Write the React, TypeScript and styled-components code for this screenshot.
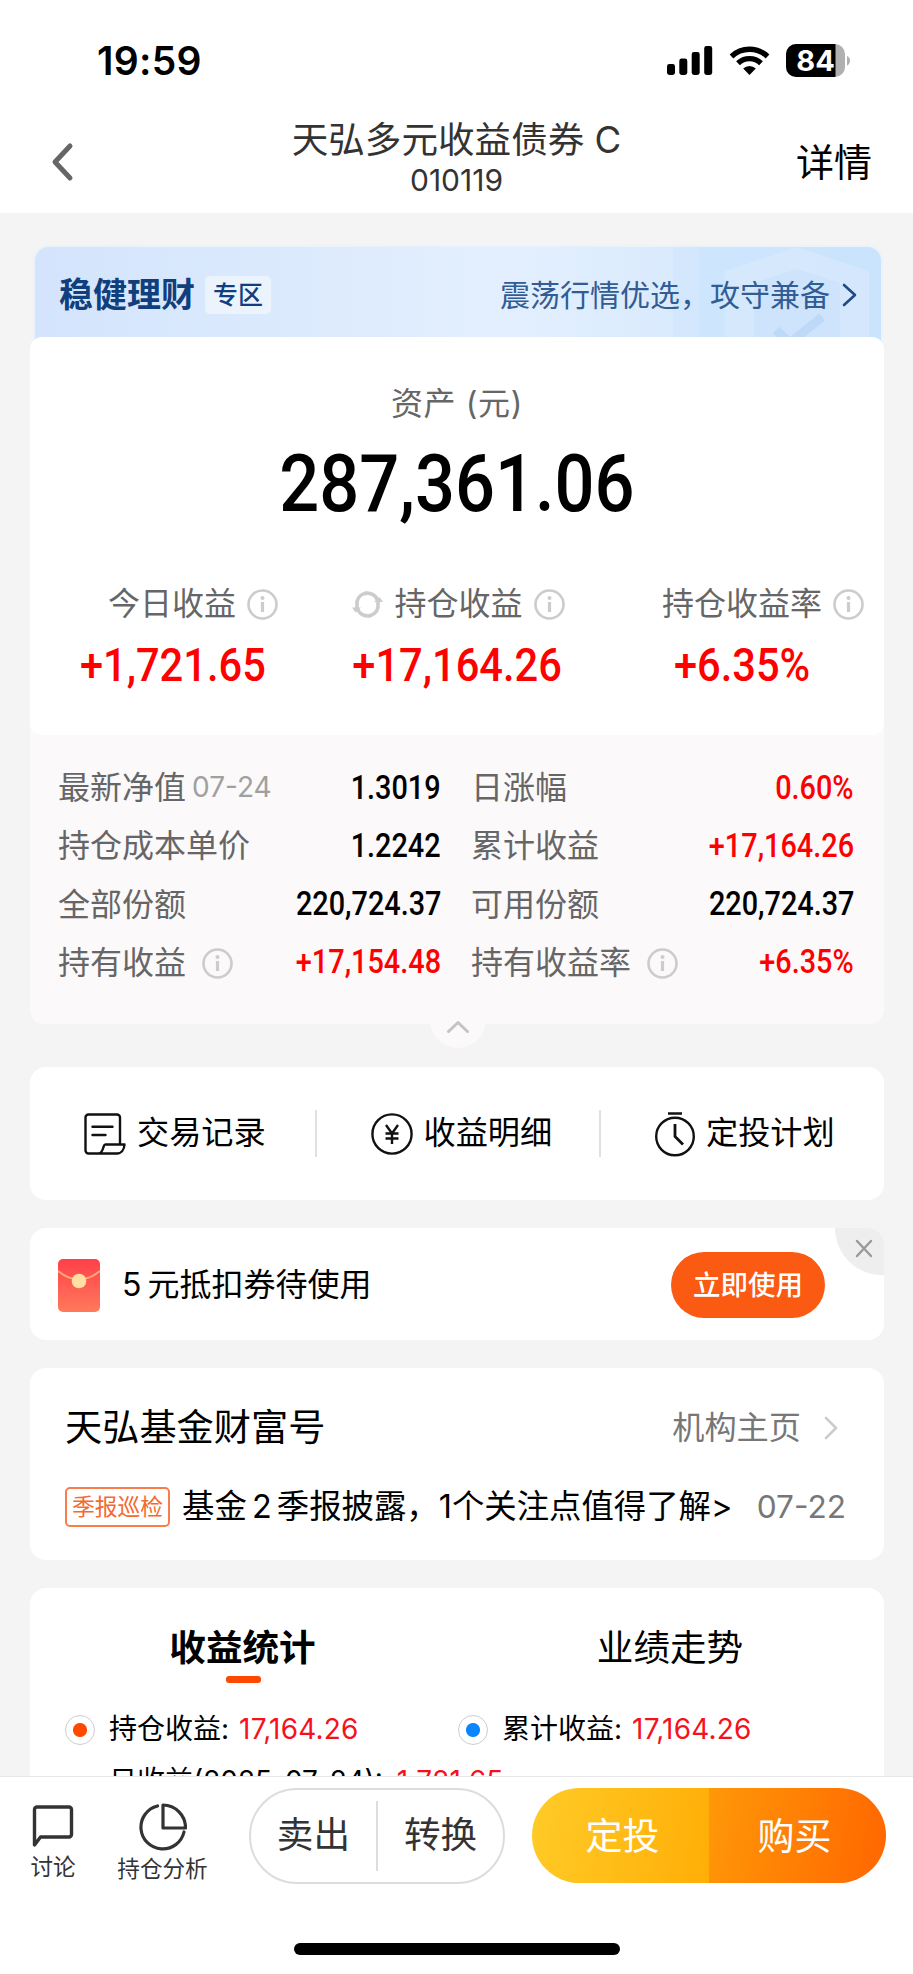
import React from 'react';
import styled, { createGlobalStyle, css } from 'styled-components';

const GlobalStyle = createGlobalStyle`
  * {
    box-sizing: border-box;
  }
  body {
    margin: 0;
    background: #f4f4f4;
    font-family: Inter, 'Noto Sans CJK SC', sans-serif;
    color: #000;
  }
`;

const Page = styled.div`
  width: 913px;
  height: 1974px;
  overflow: hidden;
  display: flex;
  flex-direction: column;
`;

const Row = styled.div<{ gap?: number }>`
  display: flex;
  align-items: center;
  gap: ${props => props.gap || 0}px;
`;

const Text = styled.span<{
  size: number;
  color?: string;
  weight?: number;
  spacing?: number;
}>`
  font-size: ${props => props.size}px;
  line-height: 1.2;
  color: ${props => props.color || '#000'};
  font-weight: ${props => props.weight || 400};
  letter-spacing: ${props => props.spacing || 0}px;
  white-space: nowrap;
`;

const Amount = styled.span<{
  size: number;
  up?: boolean;
  origin?: string;
  stretch?: number;
}>`
  display: inline-block;
  font-family: Roboto, sans-serif;
  font-weight: 500;
  font-size: ${props => props.size}px;
  line-height: 1.2;
  color: ${props => (props.up ? '#f00' : '#000')};
  transform: scaleX(${props => props.stretch || 0.88});
  transform-origin: ${props => props.origin || 'center'};
  white-space: nowrap;
`;

/* header */

const StatusBar = styled.div`
  height: 97px;
  padding: 25px 62px 0 97px;
  background: #fff;
  display: flex;
  align-items: center;
  justify-content: space-between;
`;

const NavBar = styled.div`
  height: 116px;
  padding: 15px 39px 0;
  background: #fff;
  display: grid;
  grid-template-columns: 78px 1fr 78px;
  align-items: center;
`;

const Back = styled.div`
  padding: 0 0 2px 11px;
  display: flex;
`;

const NavTitle = styled.div`
  display: flex;
  flex-direction: column;
  align-items: center;
  padding-bottom: 8px;
`;

const Content = styled.div`
  flex: 1;
  min-height: 0;
  overflow: hidden;
  padding: 32px 29px 0 30px;
`;

/* asset card */

const Banner = styled.div`
  position: relative;
  height: 104px;
  margin: 0 1px 0 3px;
  padding: 0 23px 6px 24px;
  border: 2px solid #eaf2fb;
  border-bottom: 0;
  border-radius: 16px 16px 0 0;
  background: linear-gradient(90deg, #d3e4fc, #e3effe 55%, #cfe6fd);
  overflow: hidden;
  display: flex;
  align-items: center;
  justify-content: space-between;
`;

const Watermark = styled.svg`
  position: absolute;
  right: 0;
  top: 0;
`;

const BannerPart = styled(Row)`
  position: relative;
`;

const Badge = styled.span`
  padding: 0 8px;
  height: 38px;
  border-radius: 5px;
  background: #ebf3fd;
  display: flex;
  align-items: center;
`;

const AssetCard = styled.section`
  position: relative;
  z-index: 1;
  height: 398px;
  margin-top: -12px;
  border-radius: 12px;
  background: #fff;
`;

const AssetTotal = styled.div`
  height: 244px;
  padding-top: 48px;
  display: flex;
  flex-direction: column;
  align-items: center;
  gap: 13px;
`;

const Summary = styled.div`
  display: grid;
  grid-template-columns: repeat(3, 285px);
`;

const SummaryItem = styled.div`
  display: flex;
  flex-direction: column;
  align-items: center;
  gap: 11px;
`;

const SummaryLabel = styled(Row)<{ shift: number }>`
  height: 46px;
  margin-left: ${props => props.shift}px;
`;

const DetailPanel = styled.section`
  position: relative;
  height: 301px;
  margin-top: -12px;
  padding: 36px 30px 0 28px;
  border-radius: 0 0 14px 14px;
  background: #fbf9fa;
`;

const DetailGrid = styled.div`
  display: grid;
  grid-template-columns: 383px 383px;
  column-gap: 30px;
  grid-auto-rows: 58.3px;
`;

const DetailCell = styled.div`
  display: flex;
  align-items: center;
  justify-content: space-between;
`;

const Handle = styled.div`
  position: absolute;
  left: 400px;
  bottom: -24px;
  width: 56px;
  height: 56px;
  border-radius: 50%;
  background: #fbf9fa;
  display: flex;
  justify-content: center;
  padding-top: 28px;
`;

/* cards */

const Card = styled.section<{ height: number; top: number }>`
  position: relative;
  height: ${props => props.height}px;
  margin-top: ${props => props.top}px;
  border-radius: 16px;
  background: #fff;
  overflow: hidden;
`;

const Shortcuts = styled.div`
  height: 100%;
  display: grid;
  grid-template-columns: repeat(3, 284.500px);
  align-items: center;
`;

const Shortcut = styled.div<{ divided?: boolean }>`
  height: 47px;
  padding-left: 54px;
  display: flex;
  align-items: center;
  gap: 11px;
  ${props =>
    props.divided &&
    css`
      border-left: 2px solid #e0e0e0;
    `}
`;

const Coupon = styled(Row)`
  height: 100%;
  padding: 2px 59px 0 28px;
`;

const CouponText = styled(Text)`
  flex: 1;
  margin-left: 22px;
  word-spacing: -3px;
`;

const UseButton = styled.button`
  width: 154px;
  height: 66px;
  border: 0;
  border-radius: 33px;
  padding: 0;
  background: #fb5a13;
  font-family: inherit;
`;

const Close = styled.div`
  position: absolute;
  right: 0;
  top: 0;
  width: 49px;
  height: 47px;
  border-bottom-left-radius: 47px;
  background: #eee;
  display: flex;
  padding: 11px 0 0 20px;
`;

const FundHead = styled.div`
  height: 118px;
  padding: 2px 46px 0 35px;
  display: flex;
  align-items: center;
  justify-content: space-between;
`;

const FundNews = styled.div`
  height: 42px;
  padding: 0 38px 0 35px;
  display: flex;
  align-items: center;
`;

const Tag = styled.span`
  width: 105px;
  height: 40px;
  margin-right: 12px;
  border: 2px solid #f97c4b;
  border-radius: 5px;
  display: flex;
  align-items: center;
  justify-content: center;
`;

const NewsTitle = styled(Text)`
  flex: 1;
  word-spacing: -4px;
`;

const Tabs = styled.div`
  display: grid;
  grid-template-columns: 425px 430px;
`;

const Tab = styled.div<{ active?: boolean }>`
  height: 95px;
  padding-top: 39px;
  display: flex;
  flex-direction: column;
  align-items: center;
  gap: 5px;
  &::after {
    content: '';
    width: 35px;
    height: 7px;
    margin-left: 2px;
    border-radius: 3px;
    background: ${props => (props.active ? '#ff4800' : 'transparent')};
  }
`;

const Legends = styled.div`
  padding: 21px 0 0 35px;
  display: grid;
  grid-template-columns: 393px 1fr;
  grid-auto-rows: 52px;
`;

const Legend = styled.div<{ wide?: boolean }>`
  display: flex;
  align-items: center;
  grid-column: ${props => (props.wide ? '1 / -1' : 'auto')};
`;

const Dot = styled.span<{ color?: string }>`
  width: 30px;
  height: 30px;
  margin-right: 14px;
  border-radius: 50%;
  ${props =>
    props.color &&
    css`
      border: 1px solid #ccccd4;
      background: radial-gradient(circle, ${props.color} 6.5px, #fff 7.5px);
    `}
`;

const LegendLabel = styled(Text)<{ gap: number }>`
  margin-right: ${props => props.gap}px;
`;

/* bottom bar */

const BottomBar = styled.footer`
  height: 198px;
  border-top: 1px solid #e8e8e8;
  background: #fff;
  display: flex;
  flex-direction: column;
  align-items: center;
`;

const BarActions = styled.div`
  width: 100%;
  height: 107px;
  padding: 11px 27px 0 30px;
  display: flex;
`;

const BarItem = styled.div<{ width: number }>`
  width: ${props => props.width}px;
  padding-top: 15px;
  display: flex;
  flex-direction: column;
  align-items: center;
  gap: 4px;
`;

const SellGroup = styled.div`
  width: 256px;
  height: 96px;
  border: 2px solid #dcdcdc;
  border-radius: 48px;
  display: flex;
  align-items: center;
  justify-content: center;
  gap: 26px;
`;

const Divider = styled.span`
  width: 2px;
  height: 70px;
  background: #ddd;
`;

const BuyGroup = styled.div`
  width: 354px;
  height: 95px;
  margin-left: 27px;
  border-radius: 48px;
  overflow: hidden;
  display: grid;
  grid-template-columns: 1fr 1fr;
`;

const BuyButton = styled.div<{ from: string; to: string; inset: string }>`
  display: flex;
  align-items: center;
  justify-content: center;
  padding: ${props => props.inset};
  background: linear-gradient(100deg, ${props => props.from}, ${props => props.to});
`;

const HomeIndicator = styled.div`
  width: 326px;
  height: 12px;
  margin-top: 59px;
  border-radius: 6px;
  background: #000;
`;

/* icons */

const InfoIcon = () => (
  <svg width="31" height="31" viewBox="0 0 31 31" fill="none" stroke="#ccc">
    <circle cx="15.5" cy="15.5" r="14" strokeWidth="2.6" />
    <path d="M15.5 13v10" strokeWidth="3.2" />
    <circle cx="15.5" cy="9" r="2" fill="#ccc" stroke="none" />
  </svg>
);

const RefreshIcon = () => (
  <svg width="31" height="27" viewBox="0 0 31 27" fill="none" stroke="#ccc" strokeWidth="3.6">
    <path d="M12 2.6A11.3 11.3 0 0 1 26 10" />
    <path d="M26 16.5a11.3 11.3 0 0 1-10 8.5" />
    <path d="M19 24.4A11.3 11.3 0 0 1 5 17" />
    <path d="M5 10.5A11.3 11.3 0 0 1 15 2" />
    <path d="M26 8v9" />
    <path d="M5 10v8" />
    <path d="M22 11h9l-3.500-5z" fill="#ccc" stroke="none" />
    <path d="M9 16.500H0l3.500 5z" fill="#ccc" stroke="none" />
  </svg>
);

const Chevron = ({
  width,
  height,
  color,
  stroke,
  d,
}: {
  width: number;
  height: number;
  color: string;
  stroke: number;
  d: string;
}) => (
  <svg
    width={width}
    height={height}
    fill="none"
    stroke={color}
    strokeWidth={stroke}
    strokeLinecap="round"
    strokeLinejoin="round"
  >
    <path d={d} />
  </svg>
);

const StatusIcons = () => (
  <svg width="184" height="34" viewBox="667 44 184 34">
    <rect x="667" y="64" width="8" height="11" rx="2.4" />
    <rect x="679.3" y="58.5" width="8" height="16.5" rx="2.4" />
    <rect x="691.7" y="52" width="8" height="23" rx="2.4" />
    <rect x="704.2" y="46" width="8" height="29" rx="2.4" />
    <g fill="none" stroke="#000" strokeWidth="5.4">
      <path d="M731.5 56.5a26 26 0 0 1 36 0" />
      <path d="M738 63.3a16.5 16.5 0 0 1 23 0" />
    </g>
    <path d="M749.5 75l-6.3-6.5a9 9 0 0 1 12.6 0z" />
    <clipPath id="battery">
      <rect x="786" y="44" width="59" height="33" rx="10" />
    </clipPath>
    <g clipPath="url(#battery)">
      <rect x="786" y="44" width="59" height="33" fill="#b0b0b0" />
      <rect x="786" y="44" width="49.5" height="33" />
    </g>
    <path d="M847 56c4 1.5 4 8 0 9.5z" fill="#b0b0b0" />
    <text
      x="815.5"
      y="71"
      fill="#fff"
      fontFamily="Inter, sans-serif"
      fontSize="29"
      fontWeight="700"
      textAnchor="middle"
    >
      84
    </text>
  </svg>
);

const RecordIcon = () => (
  <svg width="42" height="42" viewBox="0 0 42 42" fill="none" stroke="#111" strokeWidth="2.4">
    <path
      d="M36 31V4.5a3 3 0 0 0-3-3H4.5a3 3 0 0 0-3 3v33a3 3 0 0 0 3 3H33c4.5 0 7.2-4 7.5-9H21.5c-1.5 0-1.5 1-2 2.5-.8 3-2 6.5-5 6.5"
      strokeLinejoin="round"
    />
    <path d="M8.5 13.8h20M8.5 22h13" strokeLinecap="round" />
  </svg>
);

const YenIcon = () => (
  <svg width="42" height="42" viewBox="0 0 42 42" fill="none" stroke="#111" strokeWidth="2.4">
    <circle cx="21" cy="21" r="19.6" />
    <path d="M15 12l6 8.5 6-8.5M21 20.5V31M14.5 20.5h13M14.5 25.5h13" />
  </svg>
);

const ClockIcon = () => (
  <svg width="40" height="46" viewBox="0 0 40 46" fill="none" stroke="#111" strokeWidth="2.4">
    <circle cx="20" cy="25.5" r="18.8" />
    <path d="M13 2.5h14" />
    <path d="M20 13v12.5l8 8" strokeWidth="2.8" />
  </svg>
);

const EnvelopeIcon = () => (
  <svg width="42" height="53" viewBox="0 0 42 53">
    <defs>
      <linearGradient id="envelope" x1="0" y1="0" x2="0" y2="1">
        <stop offset="0" stopColor="#ff4048" />
        <stop offset="1" stopColor="#ff7a5c" />
      </linearGradient>
    </defs>
    <rect width="42" height="53" rx="5" fill="url(#envelope)" />
    <path d="M0 12q21 17 42 0" fill="none" stroke="#ffa878" strokeWidth="2" />
    <circle cx="21" cy="22" r="7.3" fill="#ffdfa3" />
  </svg>
);

const ChatIcon = () => (
  <svg width="42" height="46" viewBox="0 0 42 46" fill="none" stroke="#333" strokeWidth="3.4">
    <path
      d="M2.5 42V6.5a2.500 2.500 0 0 1 2.5-2.5h32a2.5 2.5 0 0 1 2.5 2.5v25a2.5 2.5 0 0 1-2.5 2.5H8.5z"
      strokeLinejoin="round"
    />
  </svg>
);

const PieIcon = () => (
  <svg width="48" height="48" viewBox="0 0 48 48" fill="none" stroke="#333" strokeWidth="3.2">
    <path d="M18.500 3A21.800 21.800 0 1 0 45 29" strokeLinecap="round" />
    <path d="M24 2v23h22.500A22.700 22.700 0 0 0 24 2z" strokeLinejoin="round" />
  </svg>
);

const BannerArt = () => (
  <Watermark width="208" height="102" viewBox="676 247 208 102">
    <path d="M676 247h208v102H676z" fill="#c9e2fd" opacity=".35" />
    <path d="M702 247h182v102H702z" fill="#c9e4ff" opacity=".4" />
    <path d="M728 271l72-24 72 24v78H728z" fill="#dfecfb" opacity=".45" />
    <path d="M757 283l43-14 43 14v66H757z" fill="#c8e0fb" opacity=".5" />
    <path d="M779 330l14 13 32-26" fill="none" stroke="#bed8f8" strokeWidth="9" />
  </Watermark>
);

type SummaryType = {
  label: string;
  value: string;
  shift: number;
  refresh?: boolean;
};

const summary: SummaryType[] = [
  { label: '今日收益', value: '+1,721.65', shift: 41 },
  { label: '持仓收益', value: '+17,164.26', shift: 2, refresh: true },
  { label: '持仓收益率', value: '+6.35%', shift: 41 },
];

type DetailType = {
  label: string;
  value: string;
  date?: string;
  up?: boolean;
  info?: boolean;
};

const details: DetailType[] = [
  { label: '最新净值', date: '07-24', value: '1.3019' },
  { label: '日涨幅', value: '0.60%', up: true },
  { label: '持仓成本单价', value: '1.2242' },
  { label: '累计收益', value: '+17,164.26', up: true },
  { label: '全部份额', value: '220,724.37' },
  { label: '可用份额', value: '220,724.37' },
  { label: '持有收益', value: '+17,154.48', up: true, info: true },
  { label: '持有收益率', value: '+6.35%', up: true, info: true },
];

const shortcuts = [
  { label: '交易记录', icon: <RecordIcon /> },
  { label: '收益明细', icon: <YenIcon /> },
  { label: '定投计划', icon: <ClockIcon /> },
];

const legends = [
  { label: '持仓收益:', value: '17,164.26', color: '#ff4800' },
  { label: '累计收益:', value: '17,164.26', color: '#0a84ff' },
  { label: '日收益(2025-07-24):', value: '1,721.65' },
];

const App: React.FC = () => {
  return (
    <Page>
      <GlobalStyle />
      <StatusBar>
        <Text size={39} weight={600} spacing={0.3}>
          19:59
        </Text>
        <StatusIcons />
      </StatusBar>
      <NavBar>
        <Back>
          <Chevron width={26} height={40} color="#666" stroke={5} d="M20 4L5 20l15 16" />
        </Back>
        <NavTitle>
          <Text size={36.6} color="#333">
            天弘多元收益债券 C
          </Text>
          <Text size={30} color="#333">
            010119
          </Text>
        </NavTitle>
        <Text size={38}>详情</Text>
      </NavBar>

      <Content>
        <Banner>
          <BannerArt />
          <BannerPart gap={10}>
            <Text size={34} weight={700} color="#0f3f7d">
              稳健理财
            </Text>
            <Badge>
              <Text size={25} weight={500} color="#0f3f7d">
                专区
              </Text>
            </Badge>
          </BannerPart>
          <BannerPart gap={12}>
            <Text size={30} color="#315c94">
              震荡行情优选，攻守兼备
            </Text>
            <Chevron width={16} height={26} color="#1f4a85" stroke={2.6} d="M2 3l11 10L2 23" />
          </BannerPart>
        </Banner>

        <AssetCard>
          <AssetTotal>
            <Text size={32} color="#666" spacing={0.6}>
              资产 (元)
            </Text>
            <Amount size={80}>287,361.06</Amount>
          </AssetTotal>
          <Summary>
            {summary.map(item => (
              <SummaryItem key={item.label}>
                <SummaryLabel gap={11} shift={item.shift}>
                  {item.refresh && <RefreshIcon />}
                  <Text size={32} color="#666">
                    {item.label}
                  </Text>
                  <InfoIcon />
                </SummaryLabel>
                <Amount size={46.5} up stretch={0.895}>
                  {item.value}
                </Amount>
              </SummaryItem>
            ))}
          </Summary>
        </AssetCard>

        <DetailPanel>
          <DetailGrid>
            {details.map(item => (
              <DetailCell key={item.label}>
                <Row gap={item.info ? 16 : 6}>
                  <Text size={32} color="#666">
                    {item.label}
                  </Text>
                  {item.date && (
                    <Text size={28} color="#a0a0a0">
                      {item.date}
                    </Text>
                  )}
                  {item.info && <InfoIcon />}
                </Row>
                <Amount size={32.6} up={item.up} origin="right" stretch={0.885}>
                  {item.value}
                </Amount>
              </DetailCell>
            ))}
          </DetailGrid>
          <Handle>
            <Chevron width={24} height={14} color="#c4c4c4" stroke={3} d="M2.5 11.5L12 2.5l9.5 9" />
          </Handle>
        </DetailPanel>

        <Card height={133} top={43}>
          <Shortcuts>
            {shortcuts.map((item, index) => (
              <Shortcut key={item.label} divided={index > 0}>
                {item.icon}
                <Text size={32.2}>{item.label}</Text>
              </Shortcut>
            ))}
          </Shortcuts>
        </Card>

        <Card height={112} top={28}>
          <Coupon>
            <EnvelopeIcon />
            <CouponText size={32}>5 元抵扣券待使用</CouponText>
            <UseButton>
              <Text size={27.5} weight={500} color="#fff">
                立即使用
              </Text>
            </UseButton>
          </Coupon>
          <Close>
            <Chevron width={18} height={19} color="#999" stroke={2.4} d="M2 2l14 15M16 2L2 17" />
          </Close>
        </Card>

        <Card height={192} top={28}>
          <FundHead>
            <Text size={37.2}>天弘基金财富号</Text>
            <Row gap={23}>
              <Text size={32.2} color="#777">
                机构主页
              </Text>
              <Chevron width={14} height={24} color="#ccc" stroke={2.6} d="M2 2l10 10L2 22" />
            </Row>
          </FundHead>
          <FundNews>
            <Tag>
              <Text size={22.8} color="#f4692f">
                季报巡检
              </Text>
            </Tag>
            <NewsTitle size={32.4}>基金 2 季报披露，1个关注点值得了解&gt;</NewsTitle>
            <Text size={31.6} color="#777">
              07-22
            </Text>
          </FundNews>
        </Card>

        <Card height={300} top={28}>
          <Tabs>
            <Tab active>
              <Text size={36.6} weight={700}>
                收益统计
              </Text>
            </Tab>
            <Tab>
              <Text size={36.6}>业绩走势</Text>
            </Tab>
          </Tabs>
          <Legends>
            {legends.map(item => (
              <Legend key={item.label} wide={!item.color}>
                <Dot color={item.color} />
                <LegendLabel size={28} gap={item.color ? 10 : 14}>
                  {item.label}
                </LegendLabel>
                <Text size={28} color="#f5121d" spacing={0.2}>
                  {item.value}
                </Text>
              </Legend>
            ))}
          </Legends>
        </Card>
      </Content>

      <BottomBar>
        <BarActions>
          <BarItem width={46}>
            <ChatIcon />
            <Text size={22.6} color="#333">
              讨论
            </Text>
          </BarItem>
          <BarItem width={173}>
            <PieIcon />
            <Text size={22.6} color="#333">
              持仓分析
            </Text>
          </BarItem>
          <SellGroup>
            <Text size={36.6} color="#333">
              卖出
            </Text>
            <Divider />
            <Text size={36.6} color="#333">
              转换
            </Text>
          </SellGroup>
          <BuyGroup>
            <BuyButton from="#ffcb28" to="#ffae06" inset="3px 0 0 4px">
              <Text size={37} color="#fff">
                定投
              </Text>
            </BuyButton>
            <BuyButton from="#ff9808" to="#ff6600" inset="3px 6px 0 0">
              <Text size={37} color="#fff">
                购买
              </Text>
            </BuyButton>
          </BuyGroup>
        </BarActions>
        <HomeIndicator />
      </BottomBar>
    </Page>
  );
};

export default App;
